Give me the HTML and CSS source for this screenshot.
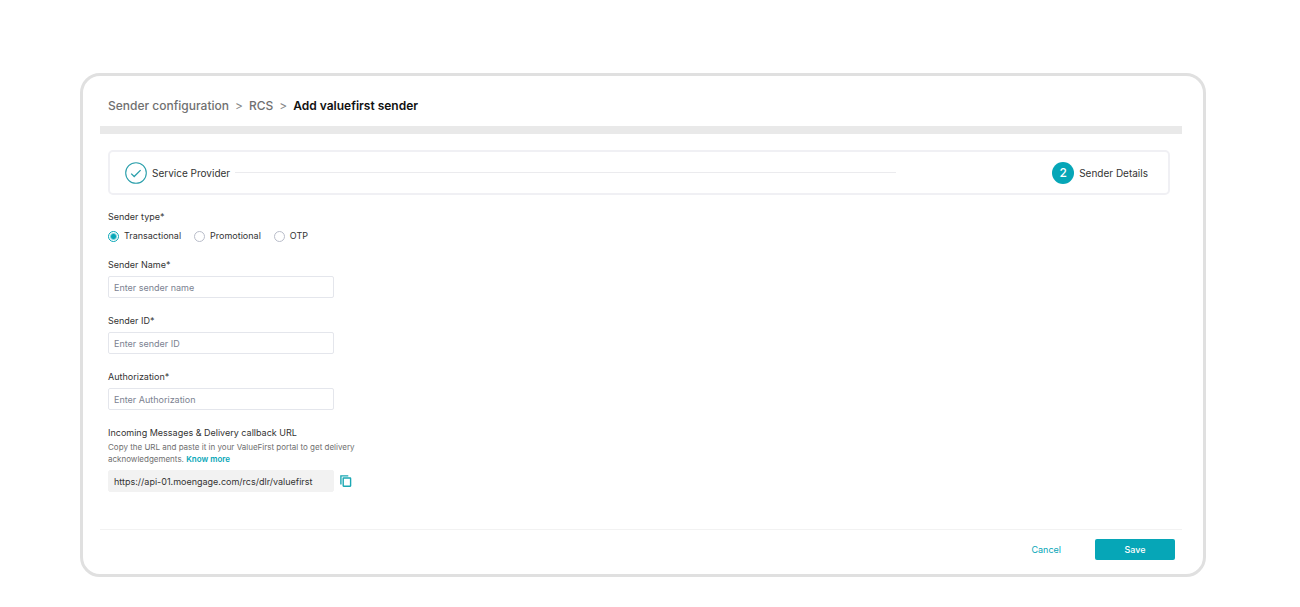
FILE: index.html
```html
<!DOCTYPE html>
<html lang="en">
<head>
    <meta charset="UTF-8">
    <meta name="viewport" content="width=device-width, initial-scale=1.0">
    <title>Add valuefirst sender</title>
    <link rel="stylesheet" href="styles.css">
</head>
<body>
    <main class="card">
        <header>
            <nav class="breadcrumb">
                <a href="#">Sender configuration</a>
                <span class="separator">&gt;</span>
                <a href="#">RCS</a>
                <span class="separator">&gt;</span>
                <h1>Add valuefirst sender</h1>
            </nav>
        </header>

        <form>
            <div class="content">
                <div class="steps">
                    <div class="step">
                        <svg class="step-icon" viewBox="0 0 22 22" fill="none" stroke="#2a9fab">
                            <circle cx="11" cy="11" r="10.3" stroke-width="1.1" />
                            <path d="M6.2 11.6l3 2.9 6.4-6.4" stroke-width="1.3" />
                        </svg>
                        <span>Service Provider</span>
                    </div>
                    <div class="step-line"></div>
                    <div class="step">
                        <span class="step-number">2</span>
                        <span>Sender Details</span>
                    </div>
                </div>

                <fieldset class="sender-type">
                    <legend>Sender type*</legend>
                    <div class="radios">
                        <label><input type="radio" name="type" checked>Transactional</label>
                        <label><input type="radio" name="type">Promotional</label>
                        <label><input type="radio" name="type">OTP</label>
                    </div>
                </fieldset>

                <div class="field">
                    <label for="sender-name">Sender Name*</label>
                    <input type="text" id="sender-name" placeholder="Enter sender name">
                </div>
                <div class="field">
                    <label for="sender-id">Sender ID*</label>
                    <input type="text" id="sender-id" placeholder="Enter sender ID">
                </div>
                <div class="field">
                    <label for="authorization">Authorization*</label>
                    <input type="text" id="authorization" placeholder="Enter Authorization">
                </div>

                <div class="callback">
                    <label for="callback-url">Incoming Messages &amp; Delivery callback URL</label>
                    <p>Copy the URL and paste it in your ValueFirst portal to get delivery<br>acknowledgements. <a href="#">Know more</a></p>
                    <div class="url-row">
                        <input type="text" id="callback-url" value="https://api-01.moengage.com/rcs/dlr/valuefirst" readonly>
                        <button type="button" class="copy" aria-label="Copy URL">
                            <svg viewBox="0 0 12 12" fill="none" stroke="#1ba8b4" stroke-width="1.4">
                                <path d="M.9 9.5V.9H8.3" />
                                <rect x="3.2" y="3" width="7.4" height="8.2" rx=".4" />
                            </svg>
                        </button>
                    </div>
                </div>
            </div>

            <footer>
                <button type="button" class="cancel">Cancel</button>
                <button type="submit" class="save">Save</button>
            </footer>
        </form>
    </main>
</body>
</html>
```
FILE: styles.css
```css
:root {
    --accent: #06a6b7;
    --text: #333;
    --muted: #6f6f6f;
    --border: #e4e6ec;
    --field-width: 226px;
}

* {
    box-sizing: border-box;
}

body {
    font-family: Inter, sans-serif;
    font-size: 9px;
    line-height: 12px;
    margin: 0;
    padding: 73px 94px 30px 80px;
    background: #fff;
    color: var(--text);
}

a {
    color: var(--accent);
    text-decoration: none;
}

input,
button {
    font: inherit;
    margin: 0;
}

.card {
    border: 3px solid #e0e0e0;
    border-radius: 20px;
    padding: 20px 21px 14px 17px;
}

header {
    padding: 0 8px 10px;
    border-bottom: 8px solid #e9e9e9;
}

.breadcrumb {
    display: flex;
    align-items: center;
    gap: 6px;
    font-size: 12px;
    line-height: 20px;
}

.breadcrumb a {
    font-weight: 500;
    color: #707070;
}

.separator {
    color: #888;
}

h1 {
    margin: 0;
    font-size: 12px;
    font-weight: 600;
    color: #111;
}

.content {
    padding: 16px 12px 37px 8px;
}

.steps {
    display: flex;
    align-items: center;
    height: 45px;
    padding: 0 20px 0 15px;
    margin-bottom: 16px;
    border: 2px solid #f0f0f4;
    border-radius: 5px;
    font-size: 10px;
}

.step {
    display: flex;
    align-items: center;
    gap: 5px;
}

.step-icon,
.step-number {
    width: 22px;
    height: 22px;
}

.step-number {
    border-radius: 50%;
    background: var(--accent);
    color: #fff;
    font-size: 12px;
    font-weight: 500;
    line-height: 22px;
    text-align: center;
}

.step-line {
    flex: 1;
    height: 1px;
    margin: 0 156px 0 5px;
    background: #ebebee;
}

.sender-type {
    border: 0;
    margin: 0 0 17px;
    padding: 0;
}

legend {
    padding: 0;
    margin-bottom: 7px;
}

.radios {
    display: flex;
    gap: 13px;
}

.radios label {
    display: flex;
    align-items: center;
    gap: 5px;
}

.radios input {
    appearance: none;
    width: 11px;
    height: 11px;
    border: 1px solid #b9bdca;
    border-radius: 50%;
}

.radios input:checked {
    border-color: var(--accent);
    background: radial-gradient(circle, var(--accent) 0 2px, #fff 4px);
}

.field {
    display: flex;
    flex-direction: column;
    gap: 5px;
    margin-bottom: 17px;
}

.field input,
.url-row input {
    width: var(--field-width);
    height: 22px;
    padding: 0 5px;
    border: 1px solid var(--border);
    border-radius: 2px;
    color: var(--text);
}

.field input::placeholder {
    color: #7c8291;
}

.callback p {
    margin: 2px 0 5px;
    font-size: 8px;
    color: var(--muted);
}

.callback a {
    font-weight: 600;
}

.url-row {
    display: flex;
    align-items: center;
    gap: 6px;
}

.url-row input {
    border-color: #f2f2f2;
    background: #f2f2f2;
}

.copy {
    width: 12px;
    height: 12px;
    padding: 0;
    border: 0;
    background: none;
}

.copy svg {
    display: block;
}

footer {
    display: flex;
    justify-content: flex-end;
    gap: 34px;
    padding: 9px 7px 0;
    border-top: 1px solid #f2f2f2;
}

footer button {
    height: 21px;
    padding: 0;
    border: 0;
    border-radius: 2px;
    cursor: pointer;
}

.cancel {
    background: none;
    color: var(--accent);
}

.save {
    width: 80px;
    background: var(--accent);
    color: #fff;
    font-weight: 500;
}
```
